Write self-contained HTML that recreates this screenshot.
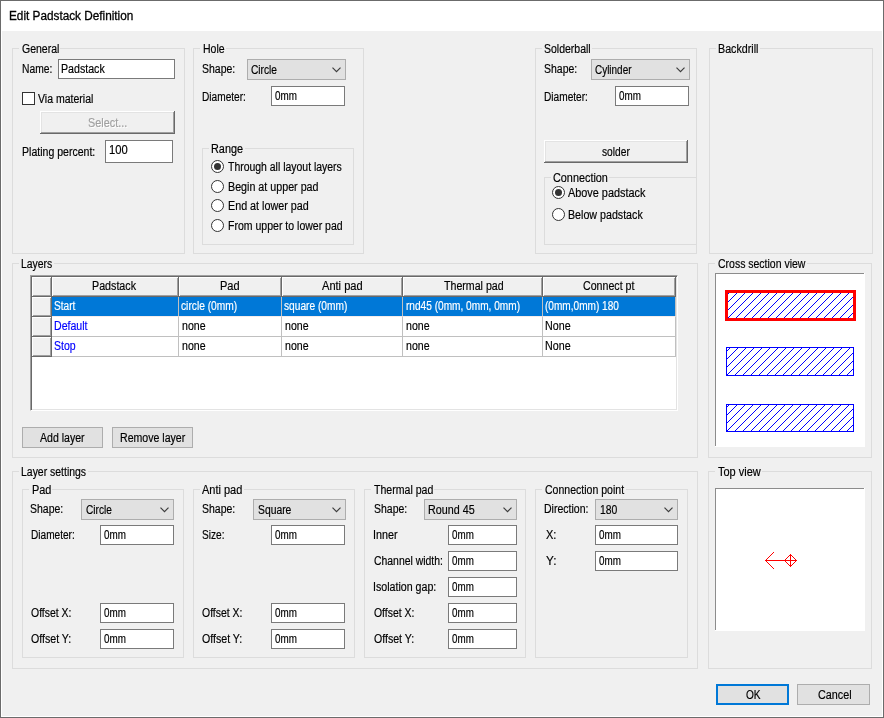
<!DOCTYPE html>
<html><head><meta charset="utf-8"><title>Edit Padstack Definition</title>
<style>
*{box-sizing:border-box}
html,body{margin:0;padding:0}
body{width:884px;height:718px;overflow:hidden;background:#f0f0f0;position:relative;font-family:"Liberation Sans",sans-serif;font-size:12px;color:#000}
#win{position:absolute;left:0;top:0;width:884px;height:718px;border:1px solid #6b6b6b;background:#f0f0f0}
#win:after{content:"";position:absolute;left:0;top:0;width:882px;height:716px;border:1px solid #fff;box-sizing:border-box}
#tb{position:absolute;left:1px;top:1px;width:882px;height:30px;background:#fff}
.gb{position:absolute;border:1px solid #dcdcdc}
.gm{position:absolute;height:1px;background:#f0f0f0}
.x{position:absolute;line-height:14px;height:14px;white-space:nowrap;transform-origin:0 0;-webkit-text-stroke:0.18px currentColor}
.x.ttl{line-height:16px;height:16px;-webkit-text-stroke:0.3px #000}
.x.g{color:#a0a0a0;text-shadow:1.15px 1px 0 #fff}
.x.w{color:#fff}
.x.b{color:#0000ff}
.in{position:absolute;border:1px solid #7a7a7a;background:#fff}
.cb{position:absolute;border:1px solid #adadad;background:#e1e1e1}
.cb .ar{position:absolute;right:3.5px;top:7px}
.bt{position:absolute;background:#f0f0f0;box-shadow:inset -1px -1px 0 #696969, inset 1px 1px 0 #fff, inset -2px -2px 0 #a0a0a0, inset 2px 2px 0 #e3e3e3}
.bt.flat{border:1px solid #adadad;background:#e1e1e1;box-shadow:none}
.bt.def{border:2px solid #0078d7;background:#e1e1e1;box-shadow:none}
.ck{position:absolute;width:13px;height:13px;border:1px solid #333;background:#fff}
.rd{position:absolute;width:13px;height:13px;border:1px solid #333;border-radius:50%;background:#fff}
.rd i{position:absolute;left:2px;top:2px;width:7px;height:7px;border-radius:50%;background:#333}
.tbl{position:absolute;background:#fff;border:1px solid;border-color:#a0a0a0 #fff #fff #a0a0a0;box-shadow:inset 1px 1px 0 #696969, inset -1px -1px 0 #e3e3e3}
.th{position:absolute;background:#f0f0f0;box-shadow:inset -1px -1px 0 #696969, inset 1px 1px 0 #fff, inset -2px -2px 0 #a0a0a0}
.td{position:absolute;background:#fff;border-right:1px solid #c0c0c0;border-bottom:1px solid #c0c0c0}
.td.sel{background:#0078d7;border-bottom-color:#f4ecec}
.cv{position:absolute}
#tx{position:absolute;left:0;top:0;width:884px;height:718px;will-change:transform}
</style></head>
<body>
<div id="win"></div><div id="tb"></div>
<div class="gb" style="left:12px;top:48px;width:173px;height:206px;"></div>
<div class="gm" style="left:19px;top:48px;width:41px"></div>
<div class="in" style="left:58px;top:59px;width:117px;height:20px"></div>
<div class="ck" style="left:22px;top:92px"></div>
<div class="bt dis" style="left:40px;top:111px;width:135px;height:23px"></div>
<div class="in" style="left:105px;top:140px;width:68px;height:23px"></div>
<div class="gb" style="left:193px;top:48px;width:171px;height:206px;"></div>
<div class="gm" style="left:200px;top:48px;width:26px"></div>
<div class="cb" style="left:247px;top:59px;width:99px;height:21px"><svg class="ar" width="10" height="7" viewBox="0 0 10 7"><path d="M0.5 0.6 L4.5 4.6 L8.5 0.6" fill="none" stroke="#3c3c3c" stroke-width="1.15"/></svg></div>
<div class="in" style="left:271px;top:86px;width:74px;height:20px"></div>
<div class="gb" style="left:202px;top:148px;width:152px;height:97px;"></div>
<div class="gm" style="left:209px;top:148px;width:36px"></div>
<div class="rd" style="left:211px;top:160px"><i></i></div>
<div class="rd" style="left:211px;top:180px"></div>
<div class="rd" style="left:211px;top:199px"></div>
<div class="rd" style="left:211px;top:219px"></div>
<div class="gb" style="left:535px;top:48px;width:162px;height:206px;"></div>
<div class="gm" style="left:542px;top:48px;width:50px"></div>
<div class="cb" style="left:591px;top:59px;width:99px;height:21px"><svg class="ar" width="10" height="7" viewBox="0 0 10 7"><path d="M0.5 0.6 L4.5 4.6 L8.5 0.6" fill="none" stroke="#3c3c3c" stroke-width="1.15"/></svg></div>
<div class="in" style="left:615px;top:86px;width:74px;height:20px"></div>
<div class="bt " style="left:544px;top:140px;width:144px;height:23px"></div>
<div class="gb" style="left:544px;top:177px;width:153px;height:68px;border-right:none;"></div>
<div class="gm" style="left:551px;top:177px;width:58px"></div>
<div class="rd" style="left:552px;top:186px"><i></i></div>
<div class="rd" style="left:552px;top:208px"></div>
<div class="gb" style="left:709px;top:48px;width:164px;height:206px;"></div>
<div class="gm" style="left:716px;top:48px;width:44px"></div>
<div class="gb" style="left:12px;top:263px;width:686px;height:195px;"></div>
<div class="gm" style="left:19px;top:263px;width:35px"></div>
<div class="tbl" style="left:30px;top:275px;width:648px;height:136px"></div>
<div class="th" style="left:32px;top:277px;width:20px;height:20px"></div>
<div class="th" style="left:52px;top:277px;width:127px;height:20px"></div>
<div class="th" style="left:179px;top:277px;width:103px;height:20px"></div>
<div class="th" style="left:282px;top:277px;width:121px;height:20px"></div>
<div class="th" style="left:403px;top:277px;width:140px;height:20px"></div>
<div class="th" style="left:543px;top:277px;width:133px;height:20px"></div>
<div class="th" style="left:32px;top:297px;width:20px;height:20px"></div>
<div class="td sel" style="left:52px;top:297px;width:127px;height:20px"></div>
<div class="td sel" style="left:179px;top:297px;width:103px;height:20px"></div>
<div class="td sel" style="left:282px;top:297px;width:121px;height:20px"></div>
<div class="td sel" style="left:403px;top:297px;width:140px;height:20px"></div>
<div class="td sel" style="left:543px;top:297px;width:133px;height:20px"></div>
<div class="th" style="left:32px;top:317px;width:20px;height:20px"></div>
<div class="td" style="left:52px;top:317px;width:127px;height:20px"></div>
<div class="td" style="left:179px;top:317px;width:103px;height:20px"></div>
<div class="td" style="left:282px;top:317px;width:121px;height:20px"></div>
<div class="td" style="left:403px;top:317px;width:140px;height:20px"></div>
<div class="td" style="left:543px;top:317px;width:133px;height:20px"></div>
<div class="th" style="left:32px;top:337px;width:20px;height:20px"></div>
<div class="td" style="left:52px;top:337px;width:127px;height:20px"></div>
<div class="td" style="left:179px;top:337px;width:103px;height:20px"></div>
<div class="td" style="left:282px;top:337px;width:121px;height:20px"></div>
<div class="td" style="left:403px;top:337px;width:140px;height:20px"></div>
<div class="td" style="left:543px;top:337px;width:133px;height:20px"></div>
<div class="bt flat" style="left:22px;top:427px;width:81px;height:21px"></div>
<div class="bt flat" style="left:112px;top:427px;width:81px;height:21px"></div>
<div class="gb" style="left:708px;top:263px;width:164px;height:195px;"></div>
<div class="gm" style="left:715px;top:263px;width:92px"></div>
<svg class="cv" style="left:715px;top:273px" width="150" height="174" viewBox="0 0 150 174" shape-rendering="crispEdges">
<defs><pattern id="h" width="8" height="8" patternUnits="userSpaceOnUse"><g fill="#0000ff"><rect x="1" y="0" width="1" height="1"/><rect x="0" y="1" width="1" height="1"/><rect x="7" y="2" width="1" height="1"/><rect x="6" y="3" width="1" height="1"/><rect x="5" y="4" width="1" height="1"/><rect x="4" y="5" width="1" height="1"/><rect x="3" y="6" width="1" height="1"/><rect x="2" y="7" width="1" height="1"/></g></pattern></defs>
<rect x="0" y="0" width="150" height="174" fill="#fff"/>
<rect x="0" y="0" width="149" height="1" fill="#8c8c8c"/><rect x="0" y="0" width="1" height="173" fill="#8c8c8c"/>
<rect x="11" y="18" width="129" height="29" fill="url(#h)"/>
<rect x="11.5" y="18.5" width="128" height="28" fill="none" stroke="#ff0000" stroke-width="3"/>
<rect x="11" y="74" width="128" height="29" fill="url(#h)"/>
<rect x="11.5" y="74.5" width="127" height="28" fill="none" stroke="#0000ff" stroke-width="1"/>
<rect x="11" y="131" width="128" height="28" fill="url(#h)"/>
<rect x="11.5" y="131.5" width="127" height="27" fill="none" stroke="#0000ff" stroke-width="1"/>
</svg>
<div class="gb" style="left:12px;top:471px;width:686px;height:198px;"></div>
<div class="gm" style="left:19px;top:471px;width:69px"></div>
<div class="gb" style="left:22px;top:489px;width:162px;height:169px;"></div>
<div class="gm" style="left:29px;top:489px;width:23px"></div>
<div class="cb" style="left:81px;top:499px;width:93px;height:21px"><svg class="ar" width="10" height="7" viewBox="0 0 10 7"><path d="M0.5 0.6 L4.5 4.6 L8.5 0.6" fill="none" stroke="#3c3c3c" stroke-width="1.15"/></svg></div>
<div class="in" style="left:100px;top:525px;width:74px;height:20px"></div>
<div class="in" style="left:100px;top:603px;width:74px;height:20px"></div>
<div class="in" style="left:100px;top:629px;width:74px;height:20px"></div>
<div class="gb" style="left:193px;top:489px;width:162px;height:169px;"></div>
<div class="gm" style="left:200px;top:489px;width:44px"></div>
<div class="cb" style="left:253px;top:499px;width:93px;height:21px"><svg class="ar" width="10" height="7" viewBox="0 0 10 7"><path d="M0.5 0.6 L4.5 4.6 L8.5 0.6" fill="none" stroke="#3c3c3c" stroke-width="1.15"/></svg></div>
<div class="in" style="left:271px;top:525px;width:74px;height:20px"></div>
<div class="in" style="left:271px;top:603px;width:74px;height:20px"></div>
<div class="in" style="left:271px;top:629px;width:74px;height:20px"></div>
<div class="gb" style="left:364px;top:489px;width:162px;height:169px;"></div>
<div class="gm" style="left:371px;top:489px;width:63px"></div>
<div class="cb" style="left:424px;top:499px;width:93px;height:21px"><svg class="ar" width="10" height="7" viewBox="0 0 10 7"><path d="M0.5 0.6 L4.5 4.6 L8.5 0.6" fill="none" stroke="#3c3c3c" stroke-width="1.15"/></svg></div>
<div class="in" style="left:448px;top:525px;width:69px;height:20px"></div>
<div class="in" style="left:448px;top:551px;width:69px;height:20px"></div>
<div class="in" style="left:448px;top:577px;width:69px;height:20px"></div>
<div class="in" style="left:448px;top:603px;width:69px;height:20px"></div>
<div class="in" style="left:448px;top:629px;width:69px;height:20px"></div>
<div class="gb" style="left:535px;top:489px;width:153px;height:169px;"></div>
<div class="gm" style="left:542px;top:489px;width:84px"></div>
<div class="cb" style="left:595px;top:499px;width:83px;height:21px"><svg class="ar" width="10" height="7" viewBox="0 0 10 7"><path d="M0.5 0.6 L4.5 4.6 L8.5 0.6" fill="none" stroke="#3c3c3c" stroke-width="1.15"/></svg></div>
<div class="in" style="left:595px;top:525px;width:83px;height:20px"></div>
<div class="in" style="left:595px;top:551px;width:83px;height:20px"></div>
<div class="gb" style="left:708px;top:471px;width:164px;height:198px;"></div>
<div class="gm" style="left:715px;top:471px;width:47px"></div>
<svg class="cv" style="left:715px;top:488px" width="150" height="143" viewBox="0 0 150 143" shape-rendering="crispEdges">
<rect x="0" y="0" width="150" height="143" fill="#fff"/>
<rect x="0" y="0" width="149" height="1" fill="#8c8c8c"/><rect x="0" y="0" width="1" height="142" fill="#8c8c8c"/>
<g stroke="#ff0000" stroke-width="1" fill="none">
<path d="M50 72.5 H82 M75.5 66 V79"/>
<path d="M58.5 64.5 L50.5 72.5 L59 81"/>
<path d="M75.5 66.5 L81.5 72.5 L75.5 78.5 L69.5 72.5 Z"/>
</g></svg>
<div class="bt def" style="left:716px;top:684px;width:73px;height:21px"></div>
<div class="bt flat" style="left:797px;top:684px;width:73px;height:21px"></div>
<div id="tx">
<div class="x ttl" style="left:9px;top:8px;transform:scaleX(0.9571);font-size:12.3px">Edit Padstack Definition</div>
<div class="x " style="left:22px;top:42px;transform:scaleX(0.8757)">General</div>
<div class="x " style="left:22px;top:62px;transform:scaleX(0.8569)">Name:</div>
<div class="x " style="left:61px;top:62px;transform:scaleX(0.8856)">Padstack</div>
<div class="x " style="left:38px;top:92px;transform:scaleX(0.8772)">Via material</div>
<div class="x g" style="left:88px;top:116px;transform:scaleX(0.9042)">Select...</div>
<div class="x " style="left:22px;top:145px;transform:scaleX(0.8790)">Plating percent:</div>
<div class="x " style="left:109px;top:143px;transform:scaleX(0.9338)">100</div>
<div class="x " style="left:203px;top:42px;transform:scaleX(0.8758)">Hole</div>
<div class="x " style="left:202px;top:62px;transform:scaleX(0.8727)">Shape:</div>
<div class="x " style="left:251px;top:63px;transform:scaleX(0.8485)">Circle</div>
<div class="x " style="left:202px;top:90px;transform:scaleX(0.8437)">Diameter:</div>
<div class="x " style="left:275px;top:89px;transform:scaleX(0.8211)">0mm</div>
<div class="x " style="left:211px;top:142px;transform:scaleX(0.9051)">Range</div>
<div class="x " style="left:228px;top:160px;transform:scaleX(0.8705)">Through all layout layers</div>
<div class="x " style="left:228px;top:180px;transform:scaleX(0.8924)">Begin at upper pad</div>
<div class="x " style="left:228px;top:199px;transform:scaleX(0.8961)">End at lower pad</div>
<div class="x " style="left:228px;top:219px;transform:scaleX(0.8773)">From upper to lower pad</div>
<div class="x " style="left:544px;top:42px;transform:scaleX(0.8747)">Solderball</div>
<div class="x " style="left:544px;top:62px;transform:scaleX(0.8727)">Shape:</div>
<div class="x " style="left:595px;top:63px;transform:scaleX(0.8292)">Cylinder</div>
<div class="x " style="left:544px;top:90px;transform:scaleX(0.8437)">Diameter:</div>
<div class="x " style="left:619px;top:89px;transform:scaleX(0.8211)">0mm</div>
<div class="x " style="left:602px;top:145px;transform:scaleX(0.8505)">solder</div>
<div class="x " style="left:553px;top:171px;transform:scaleX(0.9045)">Connection</div>
<div class="x " style="left:568px;top:186px;transform:scaleX(0.9064)">Above padstack</div>
<div class="x " style="left:568px;top:208px;transform:scaleX(0.8889)">Below padstack</div>
<div class="x " style="left:718px;top:42px;transform:scaleX(0.8930)">Backdrill</div>
<div class="x " style="left:21px;top:257px;transform:scaleX(0.8662)">Layers</div>
<div class="x " style="left:92px;top:279px;transform:scaleX(0.8916)">Padstack</div>
<div class="x " style="left:220px;top:279px;transform:scaleX(0.9189)">Pad</div>
<div class="x " style="left:322px;top:279px;transform:scaleX(0.9225)">Anti pad</div>
<div class="x " style="left:444px;top:279px;transform:scaleX(0.8847)">Thermal pad</div>
<div class="x " style="left:583px;top:279px;transform:scaleX(0.8858)">Connect pt</div>
<div class="x w" style="left:54px;top:299px;transform:scaleX(0.8421)">Start</div>
<div class="x w" style="left:181px;top:299px;transform:scaleX(0.8515)">circle (0mm)</div>
<div class="x w" style="left:284px;top:299px;transform:scaleX(0.8489)">square (0mm)</div>
<div class="x w" style="left:406px;top:299px;transform:scaleX(0.8422)">rnd45 (0mm, 0mm, 0mm)</div>
<div class="x w" style="left:545px;top:299px;transform:scaleX(0.8399)">(0mm,0mm) 180</div>
<div class="x b" style="left:54px;top:319px;transform:scaleX(0.8814)">Default</div>
<div class="x " style="left:182px;top:319px;transform:scaleX(0.8808)">none</div>
<div class="x " style="left:285px;top:319px;transform:scaleX(0.8808)">none</div>
<div class="x " style="left:406px;top:319px;transform:scaleX(0.8808)">none</div>
<div class="x " style="left:545px;top:319px;transform:scaleX(0.8927)">None</div>
<div class="x b" style="left:54px;top:339px;transform:scaleX(0.8756)">Stop</div>
<div class="x " style="left:182px;top:339px;transform:scaleX(0.8808)">none</div>
<div class="x " style="left:285px;top:339px;transform:scaleX(0.8808)">none</div>
<div class="x " style="left:406px;top:339px;transform:scaleX(0.8808)">none</div>
<div class="x " style="left:545px;top:339px;transform:scaleX(0.8927)">None</div>
<div class="x " style="left:40px;top:431px;transform:scaleX(0.8797)">Add layer</div>
<div class="x " style="left:120px;top:431px;transform:scaleX(0.8807)">Remove layer</div>
<div class="x " style="left:718px;top:257px;transform:scaleX(0.8738)">Cross section view</div>
<div class="x " style="left:21px;top:465px;transform:scaleX(0.8714)">Layer settings</div>
<div class="x " style="left:32px;top:483px;transform:scaleX(0.9092)">Pad</div>
<div class="x " style="left:30px;top:502px;transform:scaleX(0.8727)">Shape:</div>
<div class="x " style="left:86px;top:503px;transform:scaleX(0.8421)">Circle</div>
<div class="x " style="left:31px;top:528px;transform:scaleX(0.8417)">Diameter:</div>
<div class="x " style="left:104px;top:528px;transform:scaleX(0.8211)">0mm</div>
<div class="x " style="left:31px;top:606px;transform:scaleX(0.8714)">Offset X:</div>
<div class="x " style="left:104px;top:606px;transform:scaleX(0.8211)">0mm</div>
<div class="x " style="left:31px;top:632px;transform:scaleX(0.8841)">Offset Y:</div>
<div class="x " style="left:104px;top:632px;transform:scaleX(0.8211)">0mm</div>
<div class="x " style="left:202px;top:483px;transform:scaleX(0.9156)">Anti pad</div>
<div class="x " style="left:202px;top:502px;transform:scaleX(0.8727)">Shape:</div>
<div class="x " style="left:258px;top:503px;transform:scaleX(0.8611)">Square</div>
<div class="x " style="left:202px;top:528px;transform:scaleX(0.8427)">Size:</div>
<div class="x " style="left:275px;top:528px;transform:scaleX(0.8211)">0mm</div>
<div class="x " style="left:202px;top:606px;transform:scaleX(0.8714)">Offset X:</div>
<div class="x " style="left:275px;top:606px;transform:scaleX(0.8211)">0mm</div>
<div class="x " style="left:202px;top:632px;transform:scaleX(0.8841)">Offset Y:</div>
<div class="x " style="left:275px;top:632px;transform:scaleX(0.8211)">0mm</div>
<div class="x " style="left:374px;top:483px;transform:scaleX(0.8802)">Thermal pad</div>
<div class="x " style="left:374px;top:502px;transform:scaleX(0.8727)">Shape:</div>
<div class="x " style="left:428px;top:503px;transform:scaleX(0.8956)">Round 45</div>
<div class="x " style="left:373px;top:528px;transform:scaleX(0.8954)">Inner</div>
<div class="x " style="left:452px;top:528px;transform:scaleX(0.8174)">0mm</div>
<div class="x " style="left:374px;top:554px;transform:scaleX(0.8678)">Channel width:</div>
<div class="x " style="left:452px;top:554px;transform:scaleX(0.8174)">0mm</div>
<div class="x " style="left:373px;top:580px;transform:scaleX(0.8865)">Isolation gap:</div>
<div class="x " style="left:452px;top:580px;transform:scaleX(0.8174)">0mm</div>
<div class="x " style="left:374px;top:606px;transform:scaleX(0.8693)">Offset X:</div>
<div class="x " style="left:452px;top:606px;transform:scaleX(0.8174)">0mm</div>
<div class="x " style="left:374px;top:632px;transform:scaleX(0.8819)">Offset Y:</div>
<div class="x " style="left:452px;top:632px;transform:scaleX(0.8174)">0mm</div>
<div class="x " style="left:545px;top:483px;transform:scaleX(0.8784)">Connection point</div>
<div class="x " style="left:544px;top:502px;transform:scaleX(0.8759)">Direction:</div>
<div class="x " style="left:600px;top:503px;transform:scaleX(0.8650)">180</div>
<div class="x " style="left:546px;top:528px;transform:scaleX(0.9179)">X:</div>
<div class="x " style="left:599px;top:528px;transform:scaleX(0.8211)">0mm</div>
<div class="x " style="left:546px;top:554px;transform:scaleX(0.9766)">Y:</div>
<div class="x " style="left:599px;top:554px;transform:scaleX(0.8211)">0mm</div>
<div class="x " style="left:718px;top:465px;transform:scaleX(0.9145)">Top view</div>
<div class="x " style="left:746px;top:688px;transform:scaleX(0.8423)">OK</div>
<div class="x " style="left:818px;top:688px;transform:scaleX(0.8995)">Cancel</div>
</div>
</body></html>
